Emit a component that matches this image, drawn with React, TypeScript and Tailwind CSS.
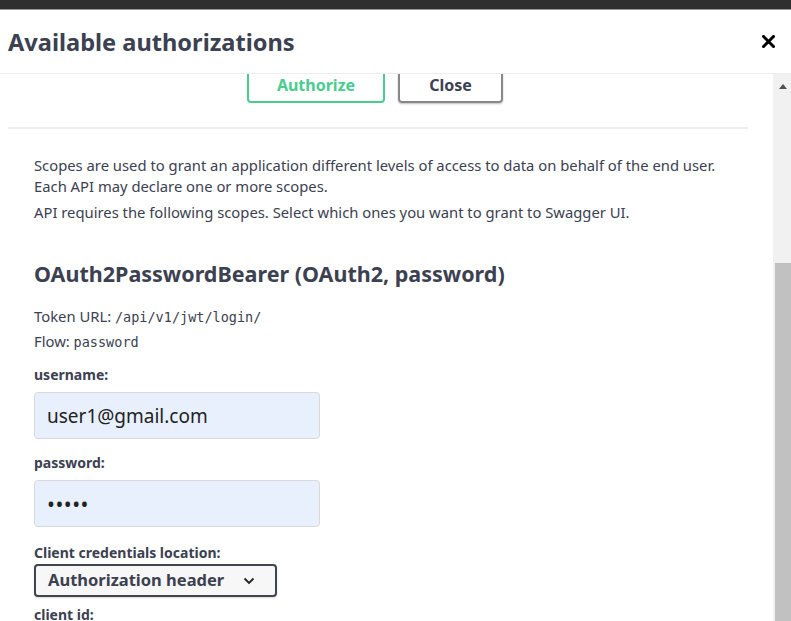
import React from "react";

const sans = "font-['Noto_Sans',sans-serif]";
const mono = "font-['DejaVu_Sans_Mono',monospace] leading-none";

const CloseIcon = () => (
  <svg width="13" height="13" viewBox="0 0 13 13" className="block">
    <path d="M1.5 1.5 L11.5 11.5 M11.5 1.5 L1.5 11.5" stroke="#000" strokeWidth="3" strokeLinecap="square" />
  </svg>
);

const Chevron = () => (
  <svg width="12" height="8" viewBox="0 0 12 8" className="block">
    <path d="M1.5 1.5 L6 6 L10.5 1.5" stroke="#222" strokeWidth="1.8" fill="none" />
  </svg>
);

const Scrollbar = () => (
  <div className="w-[18px] shrink-0 bg-[#f1f1f1] flex flex-col">
    <div className="h-[24px] flex items-center justify-center pl-[2px]">
      <svg width="8" height="5" viewBox="0 0 8 5">
        <path d="M0 5 L4 0 L8 5 Z" fill="#505050" />
      </svg>
    </div>
    <div className="h-[165px]" />
    <div className="flex-1 ml-[2px] bg-[#c1c1c1]" />
  </div>
);

const Field = ({ label, value, mt, secret }: { label: string; value: string; mt: string; secret?: boolean }) => (
  <>
    <div className={`${mt} h-[20px] leading-[20px] text-[14px] font-bold text-[#3b4151]`}>{label}</div>
    <div
      className={`mt-[7px] w-[286px] h-[47px] rounded-[4px] border border-[#d9d9d9] bg-[#e8f0fe] flex items-center px-[12px] pt-[2px] text-[#222] ${
        secret ? "text-[21px] tracking-[0.5px]" : "text-[19px]"
      }`}
    >
      {value}
    </div>
  </>
);

const App = () => {
  return (
    <div className={`w-[791px] h-[621px] overflow-hidden flex flex-col bg-white ${sans}`}>
      {/* browser chrome strip */}
      <div className="h-[9px] bg-[#2f2f2f] shrink-0" />
      <div className="h-[1px] bg-[#9a9a9a] shrink-0" />

      {/* Modal header */}
      <div className="h-[63px] shrink-0 flex items-center justify-between pl-[8px] pr-[16px]">
        <h3 className="text-[23.6px] font-bold text-[#3b4151] leading-none pt-[2px]">Available authorizations</h3>
        <CloseIcon />
      </div>
      <div className="h-[1px] bg-[#ededed] shrink-0" />

      {/* Body */}
      <div className="flex-1 flex overflow-hidden">
        <div className="flex-1 overflow-hidden">
          <div className="-mt-[7px] pl-[8px] pr-[25px]">
            <div className="flex justify-center gap-[13px] pr-[6px]">
              <button className="w-[138px] h-[36px] rounded-[4px] border-2 border-[#49cc90] text-[#49cc90] font-bold text-[16px]">
                Authorize
              </button>
              <button className="w-[105px] h-[36px] rounded-[4px] border-2 border-[#888] text-[#3b4151] font-bold text-[16px] shadow-[0_1px_2px_rgba(0,0,0,0.25)]">
                Close
              </button>
            </div>
            <div className="mt-[24px] h-[2px] bg-[#efefef]" />

            <div className="pl-[26px] text-[#3b4151]">
              <p className="mt-[26px] text-[14.8px] leading-[21px]">
                Scopes are used to grant an application different levels of access to data on behalf of the end user.
                <br />
                Each API may declare one or more scopes.
              </p>
              <p className="mt-[5px] text-[14.8px] leading-[21px]">
                API requires the following scopes. Select which ones you want to grant to Swagger UI.
              </p>

              <h4 className="mt-[36px] text-[21.5px] leading-[30px] font-bold">OAuth2PasswordBearer (OAuth2, password)</h4>

              <p className="mt-[17px] text-[14.8px] leading-[20px]">
                Token URL: <code className={`${mono} text-[13.5px]`}>/api/v1/jwt/login/</code>
              </p>
              <p className="mt-[5px] text-[14.8px] leading-[20px]">
                Flow: <code className={`${mono} text-[13.5px]`}>password</code>
              </p>

              <Field label="username:" value="user1@gmail.com" mt="mt-[14px]" />
              <Field label="password:" value="•••••" mt="mt-[14px]" secret />

              <div className="mt-[16px] h-[20px] leading-[20px] text-[14px] font-bold">Client credentials location:</div>
              <div className="mt-[1px] w-[243px] h-[33px] rounded-[4px] border-2 border-[#41444e] bg-[#f7f7f7] flex items-center justify-between pl-[12px] pr-[20px] shadow-[0_1px_2px_rgba(0,0,0,0.15)]">
                <span className="text-[16.5px] font-bold">Authorization header</span>
                <Chevron />
              </div>
              <div className="mt-[8px] h-[20px] leading-[20px] text-[14px] font-bold">client id:</div>
            </div>
          </div>
        </div>
        <Scrollbar />
      </div>
    </div>
  );
};

export default App;
